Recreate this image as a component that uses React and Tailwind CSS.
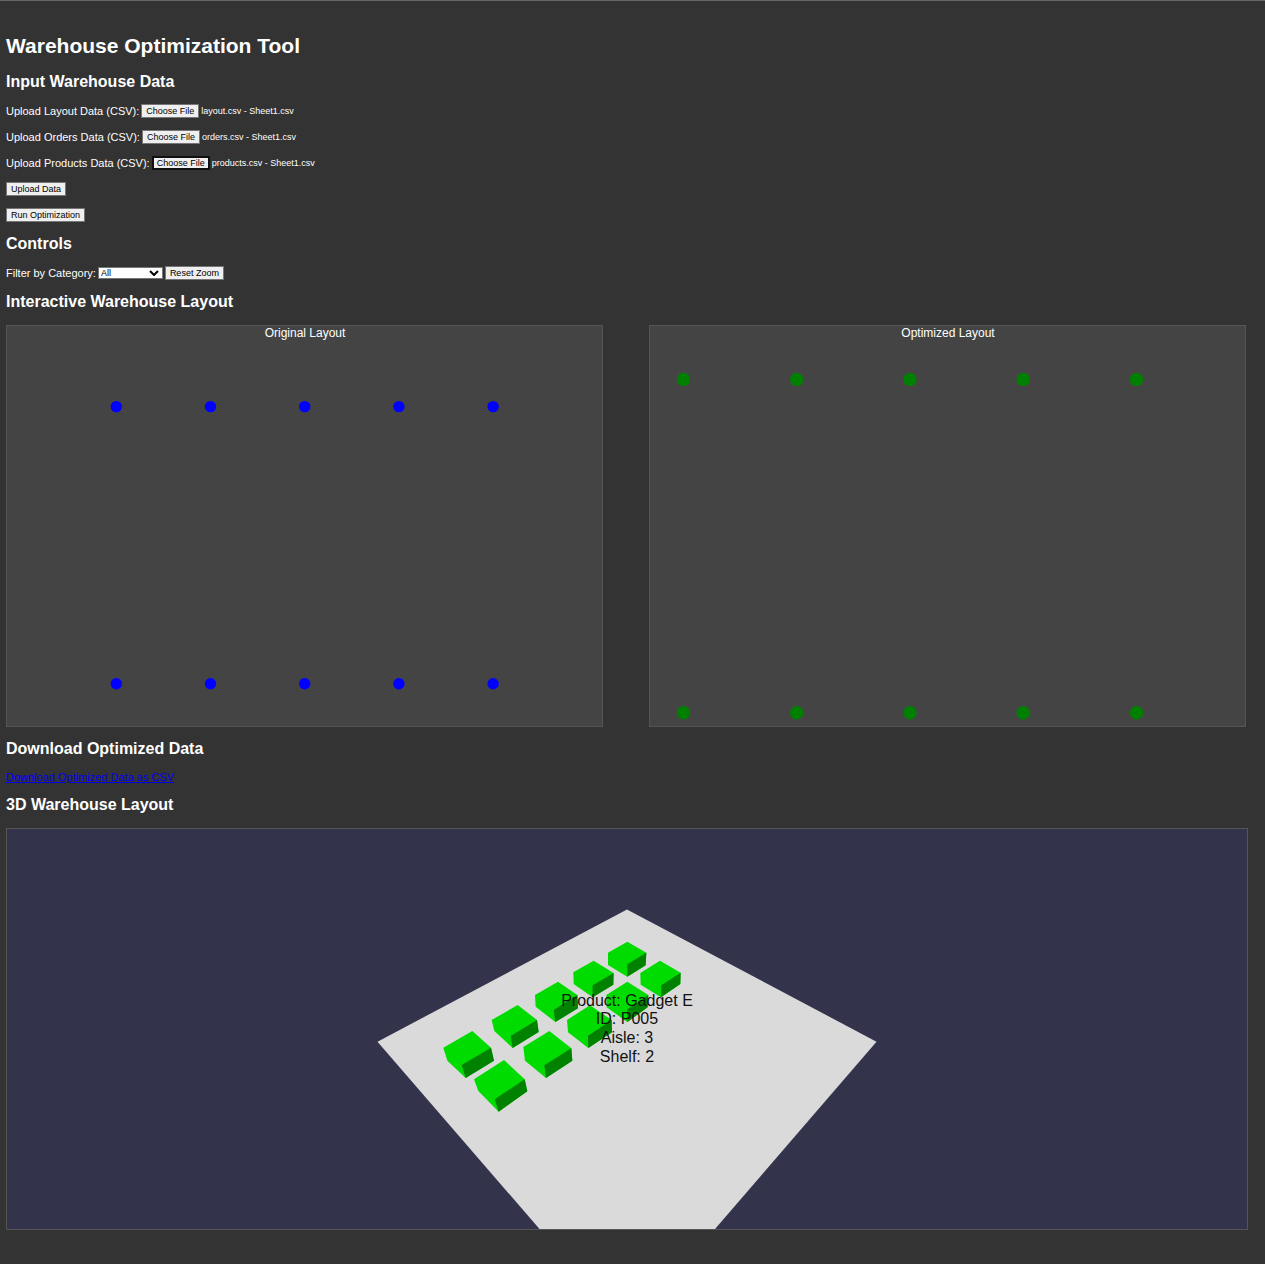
import { useRef, useState } from "react";

const heading = "text-[16px] leading-5 font-bold";
const buttonBase =
  "h-[14px] shrink-0 border border-[#767676] bg-[#efefef] px-1 text-[9px] leading-3 text-black";

const uploads = [
  { id: "layout", label: "Upload Layout Data (CSV):", file: "layout.csv - Sheet1.csv" },
  { id: "orders", label: "Upload Orders Data (CSV):", file: "orders.csv - Sheet1.csv" },
  { id: "products", label: "Upload Products Data (CSV):", file: "products.csv - Sheet1.csv", active: true },
];

function FileRow({ id, label, file, active }) {
  const input = useRef(null);
  const [name, setName] = useState(file);
  return (
    <div className="flex h-[14px] items-center text-[11px] leading-[14px]">
      <label htmlFor={id}>{label}</label>
      <input
        ref={input}
        id={id}
        type="file"
        accept=".csv"
        tabIndex={-1}
        className="sr-only"
        onChange={(e) => e.target.files[0] && setName(e.target.files[0].name)}
      />
      <button
        type="button"
        onClick={() => input.current.click()}
        className={
          active
            ? "ml-[2px] h-[14px] shrink-0 border-2 border-[#101010] bg-[#efefef] px-[3px] text-[9px] leading-[10px] text-black"
            : "ml-[2px] " + buttonBase
        }
      >
        Choose File
      </button>
      <span className="ml-[2px] text-[9px]">{name}</span>
    </div>
  );
}

function LayoutChart({ title, xs, ys, r, color }) {
  return (
    <svg
      viewBox="0 0 595 400"
      className="block h-[402px] w-full border border-[#555] bg-[#444]"
      role="img"
      aria-label={title}
    >
      <text x="298" y="11" textAnchor="middle" fontSize="12" fill="#fff">
        {title}
      </text>
      {ys.map((y) =>
        xs.map((x) => <circle key={x + "-" + y} cx={x} cy={y} r={r} fill={color} />)
      )}
    </svg>
  );
}

// Outline of each box, then its shaded right-hand face.
const boxes = [
  ["592,125 649,158 647,196 592,230 534,195 534,158", "592,193 649,158 647,196 592,230"],
  ["491,182 551,219 550,254 488,292 431,252 430,217", "488,256 551,219 550,254 488,292"],
  ["690,182 752,218 751,252 693,292 632,254 631,219", "694,256 752,218 751,252 693,292"],
  ["384,245 442,285 444,325 376,366 317,320 315,285", "371,330 442,285 444,325 376,366"],
  ["592,245 655,285 653,322 592,366 530,322 529,285", "592,328 655,285 653,322 592,366"],
  ["263,315 321,360 326,396 248,444 193,393 185,360", "242,408 321,360 326,396 248,444"],
  ["480,316 545,360 546,397 475,444 414,397 411,360", "474,407 545,360 546,397 475,444"],
  ["127,393 183,443 192,482 107,534 52,482 40,443", "95,495 183,443 192,482 107,534"],
  ["358,393 424,445 427,482 348,534 285,482 280,441", "343,496 424,445 427,482 348,534"],
  ["222,480 284,538 292,574 206,635 145,573 132,538", "194,598 284,538 292,574 206,635"],
];

const details = ["Product: Gadget E", "ID: P005", "Aisle: 3", "Shelf: 2"];

function Scene() {
  return (
    <svg
      viewBox="0 0 1240 400"
      className="mt-[13px] block h-[402px] w-full border border-[#555] bg-[#33334c]"
      role="img"
      aria-label="3D warehouse"
    >
      <polygon points="620,80.5 869.5,212.7 708,400 532.5,400 370.5,212.7" fill="#dadada" />
      <g transform="translate(423 71) scale(0.3333)">
        {boxes.map(([outline, side]) => (
          <g key={outline}>
            <polygon points={outline} fill="#00dc00" />
            <polygon points={side} fill="#008200" />
          </g>
        ))}
      </g>
      <g fontSize="16" fill="#111" textAnchor="middle">
        {details.map((line, i) => (
          <text key={line} x="620" y={177 + Math.floor(i * 18.7)}>
            {line}
          </text>
        ))}
      </g>
    </svg>
  );
}

export default function App() {
  return (
    <main className="min-h-screen border-t border-[#666] bg-[#333] pt-[33px] pr-[17px] pb-8 pl-[6px] font-['Liberation_Sans',Arial,sans-serif] text-white">
      <h1 className="text-[21px] leading-6 font-bold">Warehouse Optimization Tool</h1>

      <section className="mt-[14px]">
        <h2 className={heading}>Input Warehouse Data</h2>
        <div className="mt-3 flex flex-col items-start gap-3">
          {uploads.map((u) => (
            <FileRow key={u.id} {...u} />
          ))}
          <button type="button" className={buttonBase}>Upload Data</button>
          <button type="button" className={buttonBase}>Run Optimization</button>
        </div>
      </section>

      <section className="mt-3">
        <h2 className={heading}>Controls</h2>
        <div className="mt-3 flex h-[14px] items-center text-[11px] leading-[14px]">
          <label htmlFor="category">Filter by Category:</label>
          <div className="relative ml-[2px] flex">
            <select
              id="category"
              className="h-3 w-[65px] appearance-none border border-[#767676] bg-white pl-[2px] text-[9px] leading-[10px] text-black"
            >
              <option>All</option>
            </select>
            <svg
              viewBox="0 0 10 6"
              className="pointer-events-none absolute top-[3px] right-1 h-[6px] w-[10px]"
              fill="none"
              stroke="#000"
              strokeWidth="2"
            >
              <path d="M1 1l4 4 4-4" />
            </svg>
          </div>
          <button type="button" className={"ml-[2px] " + buttonBase}>Reset Zoom</button>
        </div>
      </section>

      <section className="mt-3">
        <h2 className={heading}>Interactive Warehouse Layout</h2>
        <div className="mt-[13px] mr-[2px] grid grid-cols-2 gap-[46px]">
          <LayoutChart
            title="Original Layout"
            xs={[109.3, 203.5, 297.7, 391.9, 486.1]}
            ys={[80.6, 357.8]}
            r={5.7}
            color="#0000ff"
          />
          <LayoutChart
            title="Optimized Layout"
            xs={[33.4, 146.7, 260, 373.2, 486.5]}
            ys={[53.4, 386.7]}
            r={6.7}
            color="#008000"
          />
        </div>
      </section>

      <section className="mt-3">
        <h2 className={heading}>Download Optimized Data</h2>
        <a href="#download" className="mt-[11px] block w-fit text-[11px] leading-[14px] text-[#0000ee] underline">
          Download Optimized Data as CSV
        </a>
      </section>

      <section className="mt-[11px]">
        <h2 className={heading}>3D Warehouse Layout</h2>
        <Scene />
      </section>
    </main>
  );
}
